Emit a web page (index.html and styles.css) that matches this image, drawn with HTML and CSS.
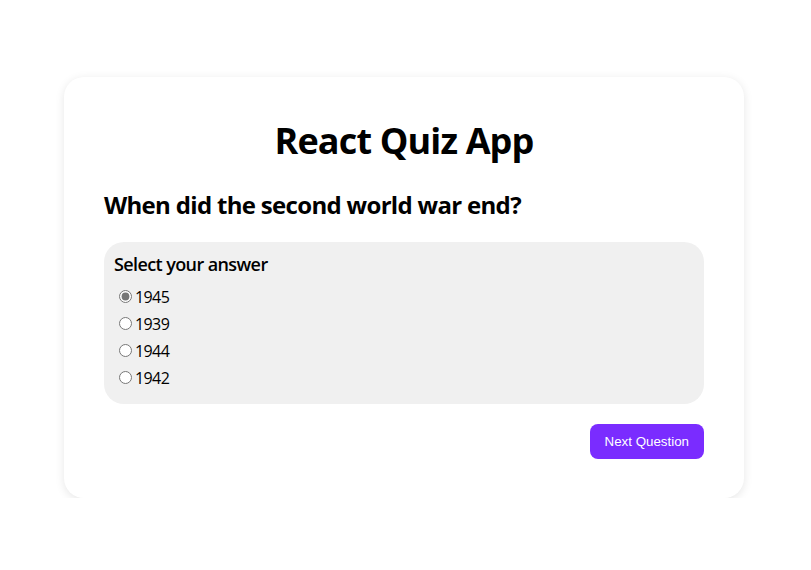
FILE: index.html
```html
<!DOCTYPE html>
<html lang="en">
<head>
<meta charset="utf-8">
<title>React Quiz App</title>
<link rel="stylesheet" href="styles.css">
</head>
<body>
<div class="page">
  <div class="card">
    <h1 class="title">React Quiz App</h1>
    <h2 class="question">When did the second world war end?</h2>
    <div class="answers">
      <div class="answers-title">Select your answer</div>
      <label class="option"><input type="radio" name="a" checked>1945</label>
      <label class="option"><input type="radio" name="a">1939</label>
      <label class="option"><input type="radio" name="a">1944</label>
      <label class="option"><input type="radio" name="a">1942</label>
    </div>
    <div class="actions">
      <button class="next">Next Question</button>
    </div>
  </div>
</div>
</body>
</html>
```
FILE: styles.css
```css
html, body {
  margin: 0;
  padding: 0;
  background: #fff;
}
body {
  font-family: "Open Sans", "Noto Sans", sans-serif;
  color: #000;
}
.page {
  padding: 77px 0 0 64px;
}
.card {
  width: 680px;
  box-sizing: border-box;
  padding: 42px 40px 39px;
  background: #fff;
  border-radius: 20px;
  box-shadow: 0 2px 10px rgba(0, 0, 0, 0.1);
}
.title {
  margin: 0;
  text-align: center;
  font-size: 36px;
  line-height: 44px;
  font-weight: 700;
  letter-spacing: -0.85px;
}
.question {
  margin: 26px 0 0;
  font-size: 24px;
  line-height: 32px;
  font-weight: 700;
  letter-spacing: -0.68px;
}
.answers {
  margin-top: 21px;
  background: #f0f0f0;
  border-radius: 20px;
  padding: 10px 10px 13px;
}
.answers-title {
  font-size: 18px;
  line-height: 24px;
  font-weight: 600;
  letter-spacing: -0.6px;
  margin-bottom: 7px;
}
.option {
  display: flex;
  align-items: center;
  height: 27px;
  font-size: 16px;
  letter-spacing: -0.6px;
}
.option input {
  margin: 0 3px 0 5px;
  width: 13px;
  height: 13px;
  accent-color: #767676;
}
.actions {
  display: flex;
  justify-content: flex-end;
  margin-top: 20px;
}
.next {
  font-family: "Liberation Sans", Arial, sans-serif;
  font-size: 13.33px;
  line-height: 15px;
  padding: 10px 15px;
  background: #7a2cff;
  color: #fff;
  border: none;
  border-radius: 8px;
}
```
